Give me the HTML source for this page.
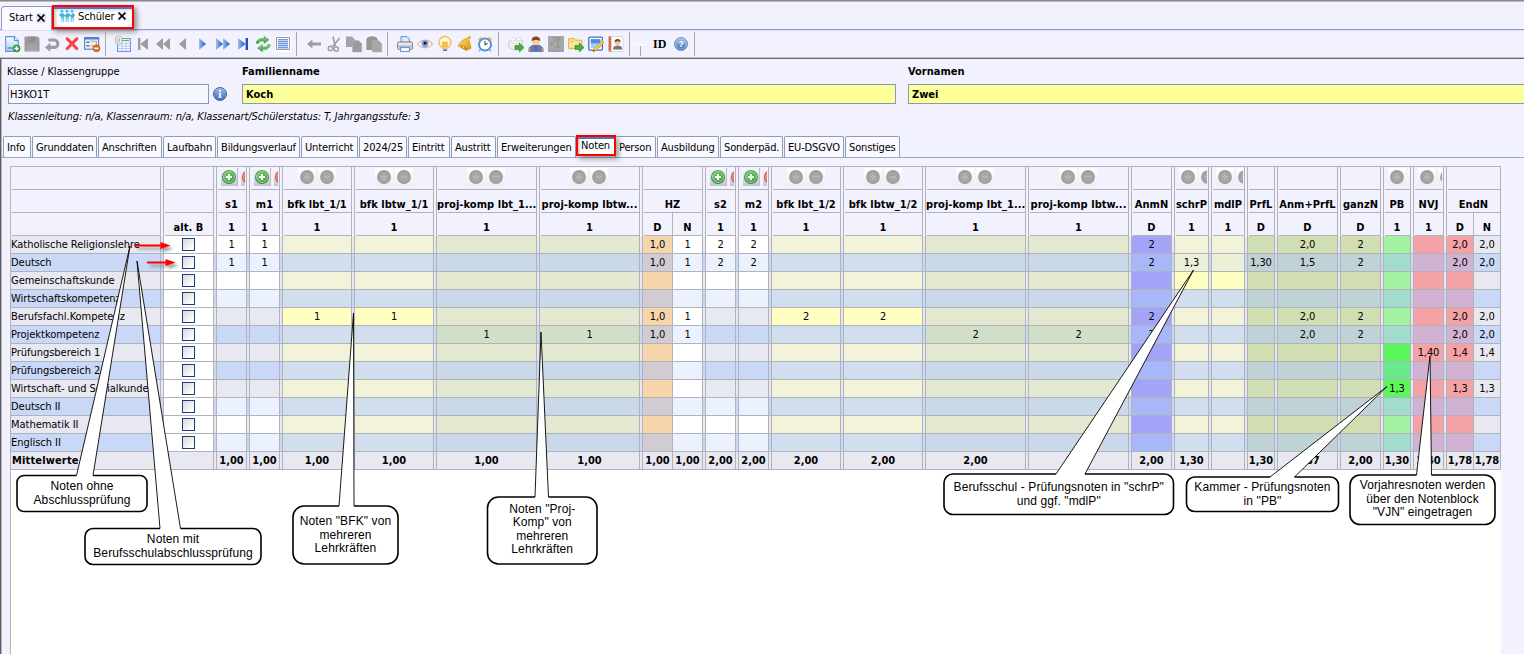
<!DOCTYPE html>
<html lang="de"><head><meta charset="utf-8"><title>Schüler – Noten</title>
<style>

html,body{margin:0;padding:0}
html{overflow:hidden}
body{width:1524px;height:654px;overflow:hidden;position:relative;background:#f2f2ff;font:11px/13px "DejaVu Sans Condensed","Liberation Sans",sans-serif;color:#000;letter-spacing:-.1px}
div,span{position:absolute;box-sizing:border-box;white-space:nowrap}
svg{position:absolute;overflow:visible}
.b{font-weight:bold;letter-spacing:0}
.c{text-align:center}
.vl{width:1px;background:#b2b2ba}
.hl{height:1px;background:#b2b2ba}
.tab{top:136px;height:21px;border:1px solid #8e9dba;border-bottom:none;border-radius:2px 2px 0 0;background:#f9f9ff;line-height:22px;padding-left:3px;letter-spacing:-.15px;overflow:hidden}
.sep{top:32px;width:1px;height:24px;background:#a6a6ac}
.cell{line-height:17px;text-align:center;height:17px}
.hd{font-weight:bold;letter-spacing:.05px;text-align:center;height:22px;line-height:30px;overflow:hidden}
.btn{top:168px;width:18px;height:18px}
.bg1{width:17px;background:linear-gradient(#f8f8ff,#c4c4d4);border-right:1px solid #bcbccc}
.bg0{background:linear-gradient(#fff,#ececf2)}
.clip{overflow:hidden;top:167px;height:22px}
.co{font:12px/13.6px "Liberation Sans",sans-serif;text-align:center;letter-spacing:.1px;white-space:normal}
.cb{width:13px;height:13px;border:1px solid #1c3f7c;background:linear-gradient(135deg,#d8d8d8,#fff 85%)}

</style></head><body>
<div style="left:0;top:0;width:1524px;height:1px;background:#8a8a8a"></div>
<div style="left:0;top:1px;width:1524px;height:1px;background:#b9b9c0"></div>
<div style="left:0;top:58px;width:1px;height:596px;background:#5e5e5e"></div>
<div style="left:1px;top:58px;width:1px;height:596px;background:#b4b4bc"></div>
<div style="left:0;top:29px;width:1524px;height:1px;background:#8fa1c2"></div>
<div style="left:0;top:30px;width:1524px;height:1px;background:#d9dff0"></div>
<div style="left:1px;top:6px;width:51px;height:24px;border:1px solid #8e9dba;border-bottom:none;border-radius:4px 0 0 0;background:#f9f9ff"></div>
<div style="left:9px;top:11px;line-height:13px">Start</div>
<div style="left:36px;top:13px;width:10px;height:10px;background:#e4e4ee"></div>
<svg style="left:37px;top:14px" width="8" height="8" viewBox="0 0 8 8"><path d="M.6.6 7.4 7.4M7.4.6.6 7.4" stroke="#000" stroke-width="1.5" fill="none"/></svg>
<div style="left:52px;top:5px;width:82px;height:24px;background:#fff;border:2px solid #f00;box-shadow:3px 3px 5px rgba(70,70,70,.55)"></div>
<div style="left:54px;top:7px;width:78px;height:2px;background:#4a76c8"></div>
<div style="left:54px;top:9px;width:78px;height:3px;background:linear-gradient(#dcdcdc,#fff)"></div>
<div style="left:54px;top:9px;width:4px;height:18px;background:linear-gradient(90deg,#c8c8c8,rgba(255,255,255,0))"></div>
<svg style="left:59px;top:10px" width="16" height="12" viewBox="0 0 16 12"><defs><linearGradient id="gpp" x1="0" y1="0" x2="0" y2="1"><stop offset="0" stop-color="#22a4d2"/><stop offset="1" stop-color="#8fd6ec"/></linearGradient></defs><g fill="url(#gpp)"><circle cx="3" cy="1.6" r="1.5"/><circle cx="8" cy="1.6" r="1.5"/><circle cx="13" cy="1.6" r="1.5"/><path d="M0 5.2 1.4 3.6h3.2L6 5.2 7.4 3.6h3.2L12 5.2 13.4 3.6h1.6l1 2.2-1.2 1.4V12h-1.2V8.6h-.6V12h-1.2V7.2L10.6 6 9.8 7.2V12H8.6V8.6H8V12H6.8V7.2L6 6 5.2 7.2V12H4V8.6h-.6V12H2.2V7.2L0 5.2z" opacity=".95"/></g></svg>
<div style="left:78px;top:10px;line-height:13px">Schüler</div>
<div style="left:117px;top:11px;width:10px;height:10px;background:#f1f1f7"></div>
<svg style="left:118px;top:12px" width="8" height="8" viewBox="0 0 8 8"><path d="M.6.6 7.4 7.4M7.4.6.6 7.4" stroke="#000" stroke-width="1.5" fill="none"/></svg>
<div style="left:0;top:57px;width:1524px;height:1px;background:#c0c0c8"></div>
<div style="left:0;top:58px;width:1524px;height:1px;background:#6c6c70"></div>
<div class="sep" style="left:105px"></div>
<div class="sep" style="left:296px"></div>
<div class="sep" style="left:387px"></div>
<div class="sep" style="left:498px"></div>
<div class="sep" style="left:629px"></div>
<div class="sep" style="left:694px"></div>
<svg width="0" height="0" style="left:0;top:0"><defs><linearGradient id="gpg" x1="0" y1="0" x2="0" y2="1"><stop offset="0" stop-color="#fdfeff"/><stop offset="1" stop-color="#a9cdf6"/></linearGradient><linearGradient id="gbl" x1="0" y1="0" x2="1" y2="0"><stop offset="0" stop-color="#9cc0f4"/><stop offset="1" stop-color="#1c50c0"/></linearGradient><linearGradient id="ggr" x1="0" y1="0" x2="0" y2="1"><stop offset="0" stop-color="#8fd58a"/><stop offset="1" stop-color="#3c9a3c"/></linearGradient><linearGradient id="ggd" x1="0" y1="0" x2="1" y2="1"><stop offset="0" stop-color="#ffe27a"/><stop offset="1" stop-color="#d8900c"/></linearGradient><linearGradient id="ghl" x1="0" y1="0" x2="0" y2="1"><stop offset="0" stop-color="#a9c3ea"/><stop offset="1" stop-color="#3b6cb6"/></linearGradient><radialGradient id="gbu" cx=".5" cy=".4" r=".6"><stop offset="0" stop-color="#ffffff"/><stop offset="1" stop-color="#ffe9a0"/></radialGradient></defs></svg>
<svg style="left:5px;top:36px" width="16" height="16" viewBox="0 0 16 16"><path d="M.7.6h8.6l4 4v10.8H.7z" fill="url(#gpg)" stroke="#5f93dc" stroke-width="1.1"/><path d="M9.3.6v4h4" fill="#dcebfb" stroke="#4f86d6" stroke-width="1"/><rect x="2.4" y="11" width="7" height="2" fill="#6fa4e6"/><circle cx="11.6" cy="12.4" r="3.5" fill="#3fa23c" stroke="#2a7d28" stroke-width=".6"/><path d="M11.6 10.2v4.4M9.4 12.4h4.4" stroke="#fff" stroke-width="1.5"/></svg>
<svg style="left:24px;top:36px" width="16" height="16" viewBox="0 0 16 16"><path d="M1 .6h12.6L15.5 2.4V15.4H.5V1.1z" fill="#9c9c9c"/><rect x="4" y=".6" width="7" height="5" fill="#8c8c8c"/><rect x="5.2" y="1.4" width="1.3" height="3" fill="#a8a8a8"/><rect x="3" y="8.6" width="10" height="6.2" fill="#a9a9a9"/><path d="M4 10.4h8M4 12.4h8" stroke="#999" stroke-width=".8"/></svg>
<svg style="left:45px;top:36px" width="16" height="16" viewBox="0 0 16 16"><path d="M3.4 4H9.2a3.7 3.7 0 0 1 0 7.4H4" fill="none" stroke="#9c9c9c" stroke-width="3.1"/><path d="M0 11.4 5.2 6.8v9z" fill="#9c9c9c"/></svg>
<svg style="left:65px;top:36px" width="14" height="16" viewBox="0 0 14 16"><path d="M2.2 2.8 11.8 12.6M11.8 2.8 2.2 12.6" stroke="#f79a9a" stroke-width="4" stroke-linecap="round" opacity=".55"/><path d="M2.2 2.8 11.8 12.6M11.8 2.8 2.2 12.6" stroke="#f04444" stroke-width="2.7" stroke-linecap="round"/></svg>
<svg style="left:84px;top:36px" width="16" height="16" viewBox="0 0 16 16"><rect x=".6" y="1.6" width="14" height="11.6" fill="#f1efe4" stroke="#4c7fd2" stroke-width="1.1"/><rect x=".6" y="1.3" width="14" height="2.2" fill="#4c7fd2"/><rect x="2.4" y="5.6" width="3" height="1.4" fill="#3d6fd0"/><rect x="2.4" y="9.2" width="3" height="1.4" fill="#3d6fd0"/><path d="M6.4 5.2h6v3.4M6.4 9.9h4" stroke="#a0a0a0" stroke-width=".9" fill="none"/><circle cx="12.5" cy="12.3" r="3.5" fill="#e8701c" stroke="#b84e0c" stroke-width=".6"/><rect x="10.4" y="11.6" width="4.2" height="1.5" fill="#fff"/></svg>
<svg style="left:115px;top:36px" width="16" height="16" viewBox="0 0 16 16"><rect x="2.6" y="2.6" width="12.8" height="12.8" fill="#fff" stroke="#6d9ce2" stroke-width="1.2"/><path d="M6 4.6h8" stroke="#69b84a" stroke-width="1.2"/><path d="M3 7.4h12M3 10h12M3 12.6h12M7 6v9M11 6v9" stroke="#9dbdee" stroke-width=".8"/><rect x=".4" y=".4" width="6.4" height="7.6" rx="1.6" fill="#ececec" stroke="#b4b4b4" stroke-width=".8"/><path d="M2.8 2.2v4M4.4 2.2v4" stroke="#aaa" stroke-width=".8"/></svg>
<svg style="left:135px;top:36px" width="16" height="16" viewBox="0 0 16 16"><rect x="3" y="2" width="2.4" height="12" fill="#9c9c9c"/><path d="M5.4 8 13 2v12z" fill="#9c9c9c"/></svg>
<svg style="left:155px;top:36px" width="16" height="16" viewBox="0 0 16 16"><path d="M1 8 8 2v12zM8 8 15 2v12z" fill="#9c9c9c"/></svg>
<svg style="left:175px;top:36px" width="16" height="16" viewBox="0 0 16 16"><path d="M4 8 11 2v12z" fill="#9c9c9c"/></svg>
<svg style="left:195px;top:36px" width="16" height="16" viewBox="0 0 16 16"><path d="M11 8 4 2v12z" fill="url(#gbl)"/></svg>
<svg style="left:215px;top:36px" width="16" height="16" viewBox="0 0 16 16"><path d="M8 8 1 2v12z" fill="url(#gbl)"/><path d="M15 8 8 2v12z" fill="url(#gbl)"/></svg>
<svg style="left:235px;top:36px" width="16" height="16" viewBox="0 0 16 16"><path d="M10.6 8 3 2v12z" fill="url(#gbl)"/><rect x="10.6" y="2" width="2.4" height="12" fill="#1c4fc0"/></svg>
<svg style="left:255px;top:36px" width="16" height="16" viewBox="0 0 16 16"><path d="M1 7.2C1.6 3.6 5.2 2 9 2.6V.2l5 3.6-5 3.6V5.2C6 4.6 4 5.4 3.6 7.6z" fill="url(#ggr)" stroke="#3d963d" stroke-width=".5"/><path d="M15.4 8.8c-.6 3.6-4.2 5.2-8 4.6v2.4l-5-3.6 5-3.6v2.2c3 .6 5-.2 5.4-2.4z" fill="url(#ggr)" stroke="#3d963d" stroke-width=".5"/></svg>
<svg style="left:275px;top:36px" width="16" height="16" viewBox="0 0 16 16"><rect width="16" height="16" fill="#fff"/><rect x="1.5" y="1.5" width="13" height="12" fill="#fff" stroke="#9a9a9a" stroke-width="1"/><path d="M3 3.8h10M3 5.8h10M3 7.8h10M3 9.8h10M3 11.8h10" stroke="#2f6fd0" stroke-width="1"/></svg>
<svg style="left:306px;top:36px" width="16" height="16" viewBox="0 0 16 16"><path d="M1 8 6.4 3.6v2.8H15v3.2H6.4v2.8z" fill="#9c9c9c"/></svg>
<svg style="left:326px;top:36px" width="16" height="16" viewBox="0 0 16 16"><path d="M7 0.6 9.2 10M13.6 2 6.4 11" stroke="#9c9c9c" stroke-width="1.6" fill="none"/><circle cx="4.4" cy="12.4" r="2.2" fill="none" stroke="#9c9c9c" stroke-width="1.4"/><circle cx="10.2" cy="13" r="2.2" fill="none" stroke="#9c9c9c" stroke-width="1.4"/></svg>
<svg style="left:346px;top:36px" width="16" height="16" viewBox="0 0 16 16"><path d="M0 .6h6l3 3V11H0z" fill="#a4a4a4"/><path d="M6.4 4.6H12.6l3.2 3.2V16H6.4z" fill="#9c9c9c" stroke="#b4b4b4" stroke-width=".6"/></svg>
<svg style="left:366px;top:36px" width="16" height="16" viewBox="0 0 16 16"><path d="M1.6 1.6Q6 -1 10.4 1.6L11.6 3v11H.4V3z" fill="#969696"/><path d="M6.4 4.6H12.6l3.2 3.2V16H6.4z" fill="#a6a6a6" stroke="#b4b4b4" stroke-width=".6"/></svg>
<svg style="left:397px;top:36px" width="16" height="16" viewBox="0 0 16 16"><path d="M4 .6h6l2.4 2.4V8H4z" fill="#dcebfb" stroke="#5a8fdc" stroke-width="1"/><rect x=".6" y="6" width="14.8" height="7.4" rx="1.6" fill="#e8e8e8" stroke="#787878" stroke-width="1"/><rect x="1.4" y="9.4" width="13.2" height="2.2" fill="#b9b9b9"/><rect x="3.6" y="11.6" width="8.8" height="3.8" fill="#fff" stroke="#5a8fdc" stroke-width="1"/></svg>
<svg style="left:417px;top:36px" width="16" height="16" viewBox="0 0 16 16"><path d="M.6 8C4 2.8 12 2.8 15.4 8 12 13 4 13 .6 8z" fill="#fff" stroke="#e9b798" stroke-width="1.3"/><circle cx="8" cy="7.6" r="3.6" fill="#7f9fe6"/><circle cx="8" cy="7.2" r="1.4" fill="#101020"/></svg>
<svg style="left:437px;top:36px" width="16" height="16" viewBox="0 0 16 16"><circle cx="8" cy="6.4" r="6" fill="url(#gbu)" stroke="#f2b858" stroke-width="1.2"/><rect x="5.8" y="6" width="4.4" height="5" fill="#fbc530" stroke="#f0a030" stroke-width=".6"/><rect x="5.6" y="11.4" width="4.8" height="2.6" fill="#c8c8c8"/><rect x="6.2" y="13.6" width="3.6" height="1.4" fill="#606060"/></svg>
<svg style="left:457px;top:36px" width="16" height="16" viewBox="0 0 16 16"><path d="M11.4 1.6 14.2 12.2 9 14.6 1 9.8C3 6 6.4 3 11.4 1.6z" fill="url(#ggd)" stroke="#d8900c" stroke-width=".7"/><circle cx="12.6" cy="1.4" r="1.3" fill="#e8a820"/><path d="M3.6 9.4 10 13" stroke="#b87408" stroke-width="1.2"/><circle cx="6.4" cy="11" r="1.4" fill="#f8d870" stroke="#b87408" stroke-width=".6"/></svg>
<svg style="left:477px;top:36px" width="16" height="16" viewBox="0 0 16 16"><path d="M1 3.6 3.8.8 5.6 2.4 2.6 5.4zM15 3.6 12.2.8 10.4 2.4l3 3z" fill="#f5b93c"/><circle cx="8" cy="8.6" r="6" fill="#fff" stroke="#4f92d6" stroke-width="2"/><path d="M8 5v3.8l2.6-1.6" stroke="#555" stroke-width="1.1" fill="none"/><path d="M3.4 13.6 2 15.4M12.6 13.6 14 15.4" stroke="#9a9a9a" stroke-width="1.3"/></svg>
<svg style="left:508px;top:36px" width="16" height="16" viewBox="0 0 16 16"><path d="M.6 6 7 2.4 14.6 5v6L8 14.6.6 11.6z" fill="#f0f0f0" stroke="#c6c6c6" stroke-width=".8"/><ellipse cx="5" cy="3.6" rx="2.4" ry="1.5" fill="#fff" stroke="#cfcfcf" stroke-width=".6"/><ellipse cx="10.4" cy="3" rx="2.4" ry="1.5" fill="#fff" stroke="#cfcfcf" stroke-width=".6"/><ellipse cx="7.6" cy="6" rx="2.4" ry="1.5" fill="#fff" stroke="#cfcfcf" stroke-width=".6"/><path d="M7 9.6h4.4V7L16 11.6 11.4 16v-2.6H7z" fill="#4cae3c" stroke="#2f862a" stroke-width=".7"/></svg>
<svg style="left:528px;top:36px" width="16" height="16" viewBox="0 0 16 16"><path d="M.8 15.4C.8 10.6 3.6 9 8 9s7.2 1.6 7.2 6.4z" fill="#4b82cc" stroke="#2d5ea8" stroke-width=".6"/><circle cx="8" cy="5.6" r="3.8" fill="#f6cfa6"/><path d="M3.8 5.2C3.4 1.8 6 .4 8.4.6 11.4.8 12.6 3 12.2 5.4 10.6 3.6 6.4 3.4 3.8 5.2z" fill="#8a4518"/><path d="M7.2 9.2h1.6L9.2 13 8 14.6 6.8 13z" fill="#d83a2a"/><circle cx="1.4" cy="13.6" r="1.3" fill="#f0a040"/><circle cx="14.6" cy="13.6" r="1.3" fill="#f0a040"/></svg>
<svg style="left:548px;top:36px" width="16" height="16" viewBox="0 0 16 16"><rect width="16" height="16" fill="#a8a8a8"/><text x="4.6" y="5.8" font-family="Liberation Sans,sans-serif" font-size="6.5" fill="#8a8a8a">TB</text><path d="M9.6 6v6M7 9.8l2.6 3 2.6-3M2.4 8h3M3.9 6.5v3" stroke="#8e8e8e" stroke-width="1" fill="none"/><path d="M1 15h14" stroke="#8e8e8e" stroke-width="1" stroke-dasharray="2 1"/></svg>
<svg style="left:568px;top:36px" width="16" height="16" viewBox="0 0 16 16"><path d="M.6 2.6h5.6l1.4 1.6h6.2v8.4H.6z" fill="#fbe29a" stroke="#e9ae3a" stroke-width="1"/><path d="M2.6 5.4h3" stroke="#e9ae3a" stroke-width="1"/><path d="M7 9.6h4.4V7L16 11.6 11.4 16v-2.6H7z" fill="#4cae3c" stroke="#2f862a" stroke-width=".7"/></svg>
<svg style="left:588px;top:36px" width="16" height="16" viewBox="0 0 16 16"><rect x=".8" y="1.2" width="13.6" height="13" rx="1.2" fill="#fff" stroke="#476fc2" stroke-width="1.3"/><rect x="2.8" y="3.2" width="9.6" height="9" fill="#9fd0f4"/><rect x="2.8" y="3.2" width="9.6" height="4" fill="#4a8fe0"/><path d="M14.2 4.6 16 6.4 7.6 14.8 5 15.6 5.8 13z" fill="#f8cf48" stroke="#c88a18" stroke-width=".7"/><path d="M5 15.6 5.6 13.6 7 15z" fill="#6a3c10"/></svg>
<svg style="left:608px;top:36px" width="16" height="16" viewBox="0 0 16 16"><rect x="1.6" y=".6" width="13.4" height="14.8" fill="#fff" stroke="#d0d0d0" stroke-width=".8"/><rect x=".6" y=".6" width="2.6" height="14.8" fill="#c8502c"/><path d="M0 2.4h3.4M0 4.8h3.4M0 7.2h3.4M0 9.6h3.4M0 12h3.4M0 14.2h3.4" stroke="#e8b4a0" stroke-width=".7"/><path d="M5 13.6c0-3 1.6-4 4.6-4s4.6 1 4.6 4z" fill="#6c7480"/><circle cx="9.6" cy="6.6" r="2.8" fill="#f2c8a0"/><path d="M6.6 6.2C6.4 3.8 8 2.8 9.8 3c2 .2 3 1.400 2.700 3.200C11.200 5 8.400 5 6.600 6.200z" fill="#7a421c"/></svg>
<svg style="left:674px;top:37px" width="14" height="14" viewBox="0 0 14 14"><circle cx="7" cy="7" r="6.5" fill="url(#ghl)" stroke="#6d93d0" stroke-width="1"/><circle cx="7" cy="7" r="5.2" fill="none" stroke="#c9daf3" stroke-width=".7" opacity=".8"/><text x="7" y="10.4" text-anchor="middle" font-family="Liberation Sans,sans-serif" font-weight="bold" font-size="9.5" fill="#fff">?</text></svg>
<div style="left:635px;top:44px;width:11px;height:1px;background:#fff"></div>
<div style="left:640px;top:46px;width:1px;height:10px;background:#a8a8b0"></div>
<div class="b" style="left:653px;top:38px;font:bold 12px/13px 'Liberation Serif',serif">ID</div>
<div style="left:7px;top:65px">Klasse / Klassengruppe</div>
<div style="left:8px;top:84px;width:201px;height:20px;border:1px solid #7f9db9;background:#f6f6ff;line-height:19px;padding-left:1px">H3KO1T</div>
<svg style="left:213px;top:87px" width="14" height="14" viewBox="0 0 14 14"><defs><linearGradient id="gi" x1="0" y1="0" x2="0" y2="1"><stop offset="0" stop-color="#9fbbe6"/><stop offset="1" stop-color="#3f6fb8"/></linearGradient></defs><circle cx="7" cy="7" r="6.5" fill="url(#gi)" stroke="#3d64a6" stroke-width="1"/><circle cx="7" cy="3.8" r="1.1" fill="#fff"/><path d="M5.6 5.8h2.3v4h.9v1H5.4v-1h.9V6.8h-.7z" fill="#fff"/></svg>
<div class="b" style="left:242px;top:65px">Familienname</div>
<div class="b" style="left:242px;top:84px;width:654px;height:20px;border:1px solid #7f9db9;background:#ffff99;line-height:19px;padding-left:3px">Koch</div>
<div class="b" style="left:908px;top:65px">Vornamen</div>
<div class="b" style="left:908px;top:84px;width:640px;height:20px;border:1px solid #7f9db9;background:#ffff99;line-height:19px;padding-left:3px">Zwei</div>
<div style="left:8px;top:110px;font-style:italic">Klassenleitung: n/a, Klassenraum: n/a, Klassenart/Schülerstatus: T, Jahrgangsstufe: 3</div>
<div style="left:2px;top:157px;width:1522px;height:1px;background:#9aaac6"></div>
<div class="tab" style="left:3px;width:28px">Info</div>
<div class="tab" style="left:32px;width:65px">Grunddaten</div>
<div class="tab" style="left:98px;width:64px">Anschriften</div>
<div class="tab" style="left:163px;width:53px">Laufbahn</div>
<div class="tab" style="left:217px;width:83px">Bildungsverlauf</div>
<div class="tab" style="left:301px;width:57px">Unterricht</div>
<div class="tab" style="left:359px;width:48px">2024/25</div>
<div class="tab" style="left:408px;width:42px">Eintritt</div>
<div class="tab" style="left:451px;width:45px">Austritt</div>
<div class="tab" style="left:497px;width:79px">Erweiterungen</div>
<div class="tab" style="left:615px;width:41px">Person</div>
<div class="tab" style="left:657px;width:62px">Ausbildung</div>
<div class="tab" style="left:720px;width:63px">Sonderpäd.</div>
<div class="tab" style="left:784px;width:60px">EU-DSGVO</div>
<div class="tab" style="left:845px;width:55px">Sonstiges</div>
<div style="left:576px;top:135px;width:40px;height:21px;background:#fff;border:2px solid #f00;box-shadow:3px 3px 5px rgba(70,70,70,.5)"></div>
<div style="left:578px;top:137px;width:36px;height:2px;background:#4a76c8"></div>
<div style="left:578px;top:139px;width:3px;height:15px;background:linear-gradient(90deg,#c8c8c8,#fff)"></div>
<div style="left:581px;top:139px;line-height:13px;letter-spacing:-.15px">Noten</div>
<div style="left:10px;top:166px;width:1491px;height:488px;background:#fff;border-left:1px solid #b2b2ba"></div>
<div style="left:11px;top:167px;width:1489px;height:68px;background:#f2f2ff"></div>
<div style="left:11px;top:236px;width:1489px;height:17px;background:#e8e8f0"></div>
<div style="left:11px;top:254px;width:1489px;height:17px;background:#c9d8f7"></div>
<div style="left:11px;top:272px;width:1489px;height:17px;background:#e8e8f0"></div>
<div style="left:11px;top:290px;width:1489px;height:17px;background:#c9d8f7"></div>
<div style="left:11px;top:308px;width:1489px;height:17px;background:#e8e8f0"></div>
<div style="left:11px;top:326px;width:1489px;height:17px;background:#c9d8f7"></div>
<div style="left:11px;top:344px;width:1489px;height:17px;background:#e8e8f0"></div>
<div style="left:11px;top:362px;width:1489px;height:17px;background:#c9d8f7"></div>
<div style="left:11px;top:380px;width:1489px;height:17px;background:#e8e8f0"></div>
<div style="left:11px;top:398px;width:1489px;height:17px;background:#c9d8f7"></div>
<div style="left:11px;top:416px;width:1489px;height:17px;background:#e8e8f0"></div>
<div style="left:11px;top:434px;width:1489px;height:17px;background:#c9d8f7"></div>
<div style="left:11px;top:452px;width:1489px;height:17px;background:#e8e8f0"></div>
<div class="cell" style="left:11px;top:236px;text-align:left;letter-spacing:-.03px">Katholische Religionslehre</div>
<div class="cell" style="left:11px;top:254px;text-align:left;letter-spacing:-.03px">Deutsch</div>
<div class="cell" style="left:11px;top:272px;text-align:left;letter-spacing:-.03px">Gemeinschaftskunde</div>
<div class="cell" style="left:11px;top:290px;text-align:left;letter-spacing:-.03px">Wirtschaftskompetenz</div>
<div class="cell" style="left:11px;top:308px;text-align:left;letter-spacing:-.03px">Berufsfachl.Kompetenz</div>
<div class="cell" style="left:11px;top:326px;text-align:left;letter-spacing:-.03px">Projektkompetenz</div>
<div class="cell" style="left:11px;top:344px;text-align:left;letter-spacing:-.03px">Prüfungsbereich 1</div>
<div class="cell" style="left:11px;top:362px;text-align:left;letter-spacing:-.03px">Prüfungsbereich 2</div>
<div class="cell" style="left:11px;top:380px;text-align:left;letter-spacing:-.03px">Wirtschaft- und Sozialkunde</div>
<div class="cell" style="left:11px;top:398px;text-align:left;letter-spacing:-.03px">Deutsch II</div>
<div class="cell" style="left:11px;top:416px;text-align:left;letter-spacing:-.03px">Mathematik II</div>
<div class="cell" style="left:11px;top:434px;text-align:left;letter-spacing:-.03px">Englisch II</div>
<div class="cell b" style="left:12px;top:452px;text-align:left;letter-spacing:.15px">Mittelwerte</div>
<div class="cell" style="left:164px;top:236px;width:49px;background:#fff"></div>
<div class="cb" style="left:182px;top:238px"></div>
<div class="cell" style="left:164px;top:254px;width:49px;background:#fff"></div>
<div class="cb" style="left:182px;top:256px"></div>
<div class="cell" style="left:164px;top:272px;width:49px;background:#fff"></div>
<div class="cb" style="left:182px;top:274px"></div>
<div class="cell" style="left:164px;top:290px;width:49px;background:#fff"></div>
<div class="cb" style="left:182px;top:292px"></div>
<div class="cell" style="left:164px;top:308px;width:49px;background:#fff"></div>
<div class="cb" style="left:182px;top:310px"></div>
<div class="cell" style="left:164px;top:326px;width:49px;background:#fff"></div>
<div class="cb" style="left:182px;top:328px"></div>
<div class="cell" style="left:164px;top:344px;width:49px;background:#fff"></div>
<div class="cb" style="left:182px;top:346px"></div>
<div class="cell" style="left:164px;top:362px;width:49px;background:#fff"></div>
<div class="cb" style="left:182px;top:364px"></div>
<div class="cell" style="left:164px;top:380px;width:49px;background:#fff"></div>
<div class="cb" style="left:182px;top:382px"></div>
<div class="cell" style="left:164px;top:398px;width:49px;background:#fff"></div>
<div class="cb" style="left:182px;top:400px"></div>
<div class="cell" style="left:164px;top:416px;width:49px;background:#fff"></div>
<div class="cb" style="left:182px;top:418px"></div>
<div class="cell" style="left:164px;top:434px;width:49px;background:#fff"></div>
<div class="cb" style="left:182px;top:436px"></div>
<div class="cell" style="left:217px;top:236px;width:29px;background:#fff">1</div>
<div class="cell" style="left:217px;top:254px;width:29px;background:#ebf1ff">1</div>
<div class="cell" style="left:217px;top:272px;width:29px;background:#fff"></div>
<div class="cell" style="left:217px;top:290px;width:29px;background:#ebf1ff"></div>
<div class="cell" style="left:217px;top:398px;width:29px;background:#ebf1ff"></div>
<div class="cell" style="left:217px;top:416px;width:29px;background:#fff"></div>
<div class="cell" style="left:217px;top:434px;width:29px;background:#ebf1ff"></div>
<div class="cell b" style="left:217px;top:452px;width:29px">1,00</div>
<div class="cell" style="left:250px;top:236px;width:29px;background:#fff">1</div>
<div class="cell" style="left:250px;top:254px;width:29px;background:#ebf1ff">1</div>
<div class="cell" style="left:250px;top:272px;width:29px;background:#fff"></div>
<div class="cell" style="left:250px;top:290px;width:29px;background:#ebf1ff"></div>
<div class="cell" style="left:250px;top:398px;width:29px;background:#ebf1ff"></div>
<div class="cell" style="left:250px;top:416px;width:29px;background:#fff"></div>
<div class="cell" style="left:250px;top:434px;width:29px;background:#ebf1ff"></div>
<div class="cell b" style="left:250px;top:452px;width:29px">1,00</div>
<div class="cell" style="left:283px;top:236px;width:68px;background:#f3f3da"></div>
<div class="cell" style="left:283px;top:254px;width:68px;background:#d1deed"></div>
<div class="cell" style="left:283px;top:272px;width:68px;background:#f3f3da"></div>
<div class="cell" style="left:283px;top:290px;width:68px;background:#d1deed"></div>
<div class="cell" style="left:283px;top:308px;width:68px;background:#ffffc2">1</div>
<div class="cell" style="left:283px;top:326px;width:68px;background:#d1deed"></div>
<div class="cell" style="left:283px;top:344px;width:68px;background:#f3f3da"></div>
<div class="cell" style="left:283px;top:362px;width:68px;background:#d1deed"></div>
<div class="cell" style="left:283px;top:380px;width:68px;background:#f3f3da"></div>
<div class="cell" style="left:283px;top:398px;width:68px;background:#d1deed"></div>
<div class="cell" style="left:283px;top:416px;width:68px;background:#f3f3da"></div>
<div class="cell" style="left:283px;top:434px;width:68px;background:#d1deed"></div>
<div class="cell b" style="left:283px;top:452px;width:68px">1,00</div>
<div class="cell" style="left:355px;top:236px;width:78px;background:#f3f3da"></div>
<div class="cell" style="left:355px;top:254px;width:78px;background:#d1deed"></div>
<div class="cell" style="left:355px;top:272px;width:78px;background:#f3f3da"></div>
<div class="cell" style="left:355px;top:290px;width:78px;background:#d1deed"></div>
<div class="cell" style="left:355px;top:308px;width:78px;background:#ffffc2">1</div>
<div class="cell" style="left:355px;top:326px;width:78px;background:#d1deed"></div>
<div class="cell" style="left:355px;top:344px;width:78px;background:#f3f3da"></div>
<div class="cell" style="left:355px;top:362px;width:78px;background:#d1deed"></div>
<div class="cell" style="left:355px;top:380px;width:78px;background:#f3f3da"></div>
<div class="cell" style="left:355px;top:398px;width:78px;background:#d1deed"></div>
<div class="cell" style="left:355px;top:416px;width:78px;background:#f3f3da"></div>
<div class="cell" style="left:355px;top:434px;width:78px;background:#d1deed"></div>
<div class="cell b" style="left:355px;top:452px;width:78px">1,00</div>
<div class="cell" style="left:437px;top:236px;width:99px;background:#e3e9d1"></div>
<div class="cell" style="left:437px;top:254px;width:99px;background:#c9d9e9"></div>
<div class="cell" style="left:437px;top:272px;width:99px;background:#e3e9d1"></div>
<div class="cell" style="left:437px;top:290px;width:99px;background:#c9d9e9"></div>
<div class="cell" style="left:437px;top:308px;width:99px;background:#e3e9d1"></div>
<div class="cell" style="left:437px;top:326px;width:99px;background:#d2dfc8">1</div>
<div class="cell" style="left:437px;top:344px;width:99px;background:#e3e9d1"></div>
<div class="cell" style="left:437px;top:362px;width:99px;background:#c9d9e9"></div>
<div class="cell" style="left:437px;top:380px;width:99px;background:#e3e9d1"></div>
<div class="cell" style="left:437px;top:398px;width:99px;background:#c9d9e9"></div>
<div class="cell" style="left:437px;top:416px;width:99px;background:#e3e9d1"></div>
<div class="cell" style="left:437px;top:434px;width:99px;background:#c9d9e9"></div>
<div class="cell b" style="left:437px;top:452px;width:99px">1,00</div>
<div class="cell" style="left:540px;top:236px;width:99px;background:#e3e9d1"></div>
<div class="cell" style="left:540px;top:254px;width:99px;background:#c9d9e9"></div>
<div class="cell" style="left:540px;top:272px;width:99px;background:#e3e9d1"></div>
<div class="cell" style="left:540px;top:290px;width:99px;background:#c9d9e9"></div>
<div class="cell" style="left:540px;top:308px;width:99px;background:#e3e9d1"></div>
<div class="cell" style="left:540px;top:326px;width:99px;background:#d2dfc8">1</div>
<div class="cell" style="left:540px;top:344px;width:99px;background:#e3e9d1"></div>
<div class="cell" style="left:540px;top:362px;width:99px;background:#c9d9e9"></div>
<div class="cell" style="left:540px;top:380px;width:99px;background:#e3e9d1"></div>
<div class="cell" style="left:540px;top:398px;width:99px;background:#c9d9e9"></div>
<div class="cell" style="left:540px;top:416px;width:99px;background:#e3e9d1"></div>
<div class="cell" style="left:540px;top:434px;width:99px;background:#c9d9e9"></div>
<div class="cell b" style="left:540px;top:452px;width:99px">1,00</div>
<div class="cell" style="left:643px;top:236px;width:29px;background:#f5d5a9">1,0</div>
<div class="cell" style="left:643px;top:254px;width:29px;background:#d0ccd2">1,0</div>
<div class="cell" style="left:643px;top:272px;width:29px;background:#f5d5a9"></div>
<div class="cell" style="left:643px;top:290px;width:29px;background:#d0ccd2"></div>
<div class="cell" style="left:643px;top:308px;width:29px;background:#f5d5a9">1,0</div>
<div class="cell" style="left:643px;top:326px;width:29px;background:#d0ccd2">1,0</div>
<div class="cell" style="left:643px;top:344px;width:29px;background:#f5d5a9"></div>
<div class="cell" style="left:643px;top:362px;width:29px;background:#d0ccd2"></div>
<div class="cell" style="left:643px;top:380px;width:29px;background:#f5d5a9"></div>
<div class="cell" style="left:643px;top:398px;width:29px;background:#d0ccd2"></div>
<div class="cell" style="left:643px;top:416px;width:29px;background:#f5d5a9"></div>
<div class="cell" style="left:643px;top:434px;width:29px;background:#d0ccd2"></div>
<div class="cell b" style="left:643px;top:452px;width:29px">1,00</div>
<div class="cell" style="left:673px;top:236px;width:29px;background:#fff">1</div>
<div class="cell" style="left:673px;top:254px;width:29px;background:#ebf1ff">1</div>
<div class="cell" style="left:673px;top:272px;width:29px;background:#fff"></div>
<div class="cell" style="left:673px;top:290px;width:29px;background:#ebf1ff"></div>
<div class="cell" style="left:673px;top:308px;width:29px;background:#fff">1</div>
<div class="cell" style="left:673px;top:326px;width:29px;background:#ebf1ff">1</div>
<div class="cell" style="left:673px;top:344px;width:29px;background:#fff"></div>
<div class="cell" style="left:673px;top:362px;width:29px;background:#ebf1ff"></div>
<div class="cell" style="left:673px;top:380px;width:29px;background:#fff"></div>
<div class="cell" style="left:673px;top:398px;width:29px;background:#ebf1ff"></div>
<div class="cell" style="left:673px;top:416px;width:29px;background:#fff"></div>
<div class="cell" style="left:673px;top:434px;width:29px;background:#ebf1ff"></div>
<div class="cell b" style="left:673px;top:452px;width:29px">1,00</div>
<div class="cell" style="left:706px;top:236px;width:29px;background:#fff">2</div>
<div class="cell" style="left:706px;top:254px;width:29px;background:#ebf1ff">2</div>
<div class="cell" style="left:706px;top:272px;width:29px;background:#fff"></div>
<div class="cell" style="left:706px;top:290px;width:29px;background:#ebf1ff"></div>
<div class="cell" style="left:706px;top:398px;width:29px;background:#ebf1ff"></div>
<div class="cell" style="left:706px;top:416px;width:29px;background:#fff"></div>
<div class="cell" style="left:706px;top:434px;width:29px;background:#ebf1ff"></div>
<div class="cell b" style="left:706px;top:452px;width:29px">2,00</div>
<div class="cell" style="left:739px;top:236px;width:29px;background:#fff">2</div>
<div class="cell" style="left:739px;top:254px;width:29px;background:#ebf1ff">2</div>
<div class="cell" style="left:739px;top:272px;width:29px;background:#fff"></div>
<div class="cell" style="left:739px;top:290px;width:29px;background:#ebf1ff"></div>
<div class="cell" style="left:739px;top:398px;width:29px;background:#ebf1ff"></div>
<div class="cell" style="left:739px;top:416px;width:29px;background:#fff"></div>
<div class="cell" style="left:739px;top:434px;width:29px;background:#ebf1ff"></div>
<div class="cell b" style="left:739px;top:452px;width:29px">2,00</div>
<div class="cell" style="left:772px;top:236px;width:68px;background:#f3f3da"></div>
<div class="cell" style="left:772px;top:254px;width:68px;background:#d1deed"></div>
<div class="cell" style="left:772px;top:272px;width:68px;background:#f3f3da"></div>
<div class="cell" style="left:772px;top:290px;width:68px;background:#d1deed"></div>
<div class="cell" style="left:772px;top:308px;width:68px;background:#ffffc2">2</div>
<div class="cell" style="left:772px;top:326px;width:68px;background:#d1deed"></div>
<div class="cell" style="left:772px;top:344px;width:68px;background:#f3f3da"></div>
<div class="cell" style="left:772px;top:362px;width:68px;background:#d1deed"></div>
<div class="cell" style="left:772px;top:380px;width:68px;background:#f3f3da"></div>
<div class="cell" style="left:772px;top:398px;width:68px;background:#d1deed"></div>
<div class="cell" style="left:772px;top:416px;width:68px;background:#f3f3da"></div>
<div class="cell" style="left:772px;top:434px;width:68px;background:#d1deed"></div>
<div class="cell b" style="left:772px;top:452px;width:68px">2,00</div>
<div class="cell" style="left:844px;top:236px;width:78px;background:#f3f3da"></div>
<div class="cell" style="left:844px;top:254px;width:78px;background:#d1deed"></div>
<div class="cell" style="left:844px;top:272px;width:78px;background:#f3f3da"></div>
<div class="cell" style="left:844px;top:290px;width:78px;background:#d1deed"></div>
<div class="cell" style="left:844px;top:308px;width:78px;background:#ffffc2">2</div>
<div class="cell" style="left:844px;top:326px;width:78px;background:#d1deed"></div>
<div class="cell" style="left:844px;top:344px;width:78px;background:#f3f3da"></div>
<div class="cell" style="left:844px;top:362px;width:78px;background:#d1deed"></div>
<div class="cell" style="left:844px;top:380px;width:78px;background:#f3f3da"></div>
<div class="cell" style="left:844px;top:398px;width:78px;background:#d1deed"></div>
<div class="cell" style="left:844px;top:416px;width:78px;background:#f3f3da"></div>
<div class="cell" style="left:844px;top:434px;width:78px;background:#d1deed"></div>
<div class="cell b" style="left:844px;top:452px;width:78px">2,00</div>
<div class="cell" style="left:926px;top:236px;width:99px;background:#e3e9d1"></div>
<div class="cell" style="left:926px;top:254px;width:99px;background:#c9d9e9"></div>
<div class="cell" style="left:926px;top:272px;width:99px;background:#e3e9d1"></div>
<div class="cell" style="left:926px;top:290px;width:99px;background:#c9d9e9"></div>
<div class="cell" style="left:926px;top:308px;width:99px;background:#e3e9d1"></div>
<div class="cell" style="left:926px;top:326px;width:99px;background:#d2dfc8">2</div>
<div class="cell" style="left:926px;top:344px;width:99px;background:#e3e9d1"></div>
<div class="cell" style="left:926px;top:362px;width:99px;background:#c9d9e9"></div>
<div class="cell" style="left:926px;top:380px;width:99px;background:#e3e9d1"></div>
<div class="cell" style="left:926px;top:398px;width:99px;background:#c9d9e9"></div>
<div class="cell" style="left:926px;top:416px;width:99px;background:#e3e9d1"></div>
<div class="cell" style="left:926px;top:434px;width:99px;background:#c9d9e9"></div>
<div class="cell b" style="left:926px;top:452px;width:99px">2,00</div>
<div class="cell" style="left:1029px;top:236px;width:99px;background:#e3e9d1"></div>
<div class="cell" style="left:1029px;top:254px;width:99px;background:#c9d9e9"></div>
<div class="cell" style="left:1029px;top:272px;width:99px;background:#e3e9d1"></div>
<div class="cell" style="left:1029px;top:290px;width:99px;background:#c9d9e9"></div>
<div class="cell" style="left:1029px;top:308px;width:99px;background:#e3e9d1"></div>
<div class="cell" style="left:1029px;top:326px;width:99px;background:#d2dfc8">2</div>
<div class="cell" style="left:1029px;top:344px;width:99px;background:#e3e9d1"></div>
<div class="cell" style="left:1029px;top:362px;width:99px;background:#c9d9e9"></div>
<div class="cell" style="left:1029px;top:380px;width:99px;background:#e3e9d1"></div>
<div class="cell" style="left:1029px;top:398px;width:99px;background:#c9d9e9"></div>
<div class="cell" style="left:1029px;top:416px;width:99px;background:#e3e9d1"></div>
<div class="cell" style="left:1029px;top:434px;width:99px;background:#c9d9e9"></div>
<div class="cell b" style="left:1029px;top:452px;width:99px">2,00</div>
<div class="cell" style="left:1132px;top:236px;width:39px;background:#a3a3f7">2</div>
<div class="cell" style="left:1132px;top:254px;width:39px;background:#a8b7f8">2</div>
<div class="cell" style="left:1132px;top:272px;width:39px;background:#a3a3f7"></div>
<div class="cell" style="left:1132px;top:290px;width:39px;background:#a8b7f8"></div>
<div class="cell" style="left:1132px;top:308px;width:39px;background:#a3a3f7">2</div>
<div class="cell" style="left:1132px;top:326px;width:39px;background:#a8b7f8">2</div>
<div class="cell" style="left:1132px;top:344px;width:39px;background:#a3a3f7"></div>
<div class="cell" style="left:1132px;top:362px;width:39px;background:#a8b7f8"></div>
<div class="cell" style="left:1132px;top:380px;width:39px;background:#a3a3f7"></div>
<div class="cell" style="left:1132px;top:398px;width:39px;background:#a8b7f8"></div>
<div class="cell" style="left:1132px;top:416px;width:39px;background:#a3a3f7"></div>
<div class="cell" style="left:1132px;top:434px;width:39px;background:#a8b7f8"></div>
<div class="cell b" style="left:1132px;top:452px;width:39px">2,00</div>
<div class="cell" style="left:1175px;top:236px;width:33px;background:#f3f3da"></div>
<div class="cell" style="left:1175px;top:254px;width:33px;background:#ecf0d6">1,3</div>
<div class="cell" style="left:1175px;top:272px;width:33px;background:#ffffc2"></div>
<div class="cell" style="left:1175px;top:290px;width:33px;background:#d1deed"></div>
<div class="cell" style="left:1175px;top:308px;width:33px;background:#f3f3da"></div>
<div class="cell" style="left:1175px;top:326px;width:33px;background:#d1deed"></div>
<div class="cell" style="left:1175px;top:344px;width:33px;background:#f3f3da"></div>
<div class="cell" style="left:1175px;top:362px;width:33px;background:#d1deed"></div>
<div class="cell" style="left:1175px;top:380px;width:33px;background:#f3f3da"></div>
<div class="cell" style="left:1175px;top:398px;width:33px;background:#d1deed"></div>
<div class="cell" style="left:1175px;top:416px;width:33px;background:#f3f3da"></div>
<div class="cell" style="left:1175px;top:434px;width:33px;background:#d1deed"></div>
<div class="cell b" style="left:1175px;top:452px;width:33px">1,30</div>
<div class="cell" style="left:1212px;top:236px;width:32px;background:#f3f3da"></div>
<div class="cell" style="left:1212px;top:254px;width:32px;background:#ecf0d6"></div>
<div class="cell" style="left:1212px;top:272px;width:32px;background:#ffffc2"></div>
<div class="cell" style="left:1212px;top:290px;width:32px;background:#d1deed"></div>
<div class="cell" style="left:1212px;top:308px;width:32px;background:#f3f3da"></div>
<div class="cell" style="left:1212px;top:326px;width:32px;background:#d1deed"></div>
<div class="cell" style="left:1212px;top:344px;width:32px;background:#f3f3da"></div>
<div class="cell" style="left:1212px;top:362px;width:32px;background:#d1deed"></div>
<div class="cell" style="left:1212px;top:380px;width:32px;background:#f3f3da"></div>
<div class="cell" style="left:1212px;top:398px;width:32px;background:#d1deed"></div>
<div class="cell" style="left:1212px;top:416px;width:32px;background:#f3f3da"></div>
<div class="cell" style="left:1212px;top:434px;width:32px;background:#d1deed"></div>
<div class="cell" style="left:1248px;top:236px;width:26px;background:#d0deb2"></div>
<div class="cell" style="left:1248px;top:254px;width:26px;background:#bfd3d6">1,30</div>
<div class="cell" style="left:1248px;top:272px;width:26px;background:#d0deb2"></div>
<div class="cell" style="left:1248px;top:290px;width:26px;background:#bfd3d6"></div>
<div class="cell" style="left:1248px;top:308px;width:26px;background:#d0deb2"></div>
<div class="cell" style="left:1248px;top:326px;width:26px;background:#bfd3d6"></div>
<div class="cell" style="left:1248px;top:344px;width:26px;background:#d0deb2"></div>
<div class="cell" style="left:1248px;top:362px;width:26px;background:#bfd3d6"></div>
<div class="cell" style="left:1248px;top:380px;width:26px;background:#d0deb2"></div>
<div class="cell" style="left:1248px;top:398px;width:26px;background:#bfd3d6"></div>
<div class="cell" style="left:1248px;top:416px;width:26px;background:#d0deb2"></div>
<div class="cell" style="left:1248px;top:434px;width:26px;background:#bfd3d6"></div>
<div class="cell b" style="left:1248px;top:452px;width:26px">1,30</div>
<div class="cell" style="left:1278px;top:236px;width:59px;background:#d0deb2">2,0</div>
<div class="cell" style="left:1278px;top:254px;width:59px;background:#bfd3d6">1,5</div>
<div class="cell" style="left:1278px;top:272px;width:59px;background:#d0deb2"></div>
<div class="cell" style="left:1278px;top:290px;width:59px;background:#bfd3d6"></div>
<div class="cell" style="left:1278px;top:308px;width:59px;background:#d0deb2">2,0</div>
<div class="cell" style="left:1278px;top:326px;width:59px;background:#bfd3d6">2,0</div>
<div class="cell" style="left:1278px;top:344px;width:59px;background:#d0deb2"></div>
<div class="cell" style="left:1278px;top:362px;width:59px;background:#bfd3d6"></div>
<div class="cell" style="left:1278px;top:380px;width:59px;background:#d0deb2"></div>
<div class="cell" style="left:1278px;top:398px;width:59px;background:#bfd3d6"></div>
<div class="cell" style="left:1278px;top:416px;width:59px;background:#d0deb2"></div>
<div class="cell" style="left:1278px;top:434px;width:59px;background:#bfd3d6"></div>
<div class="cell b" style="left:1278px;top:452px;width:59px">1,87</div>
<div class="cell" style="left:1341px;top:236px;width:39px;background:#d0deb2">2</div>
<div class="cell" style="left:1341px;top:254px;width:39px;background:#bfd3d6">2</div>
<div class="cell" style="left:1341px;top:272px;width:39px;background:#d0deb2"></div>
<div class="cell" style="left:1341px;top:290px;width:39px;background:#bfd3d6"></div>
<div class="cell" style="left:1341px;top:308px;width:39px;background:#d0deb2">2</div>
<div class="cell" style="left:1341px;top:326px;width:39px;background:#bfd3d6">2</div>
<div class="cell" style="left:1341px;top:344px;width:39px;background:#d0deb2"></div>
<div class="cell" style="left:1341px;top:362px;width:39px;background:#bfd3d6"></div>
<div class="cell" style="left:1341px;top:380px;width:39px;background:#d0deb2"></div>
<div class="cell" style="left:1341px;top:398px;width:39px;background:#bfd3d6"></div>
<div class="cell" style="left:1341px;top:416px;width:39px;background:#d0deb2"></div>
<div class="cell" style="left:1341px;top:434px;width:39px;background:#bfd3d6"></div>
<div class="cell b" style="left:1341px;top:452px;width:39px">2,00</div>
<div class="cell" style="left:1384px;top:236px;width:26px;background:#a2f2a2"></div>
<div class="cell" style="left:1384px;top:254px;width:26px;background:#a2dccc"></div>
<div class="cell" style="left:1384px;top:272px;width:26px;background:#a2f2a2"></div>
<div class="cell" style="left:1384px;top:290px;width:26px;background:#a2dccc"></div>
<div class="cell" style="left:1384px;top:308px;width:26px;background:#a2f2a2"></div>
<div class="cell" style="left:1384px;top:326px;width:26px;background:#a2dccc"></div>
<div class="cell" style="left:1384px;top:344px;width:26px;background:#5af85a"></div>
<div class="cell" style="left:1384px;top:362px;width:26px;background:#6ae98a"></div>
<div class="cell" style="left:1384px;top:380px;width:26px;background:#5af85a">1,3</div>
<div class="cell" style="left:1384px;top:398px;width:26px;background:#a2dccc"></div>
<div class="cell" style="left:1384px;top:416px;width:26px;background:#a2f2a2"></div>
<div class="cell" style="left:1384px;top:434px;width:26px;background:#a2dccc"></div>
<div class="cell b" style="left:1384px;top:452px;width:26px">1,30</div>
<div class="cell" style="left:1414px;top:236px;width:29px;background:#f4a2a6"></div>
<div class="cell" style="left:1414px;top:254px;width:29px;background:#d2b2d2"></div>
<div class="cell" style="left:1414px;top:272px;width:29px;background:#f4a2a6"></div>
<div class="cell" style="left:1414px;top:290px;width:29px;background:#d2b2d2"></div>
<div class="cell" style="left:1414px;top:308px;width:29px;background:#f4a2a6"></div>
<div class="cell" style="left:1414px;top:326px;width:29px;background:#d2b2d2"></div>
<div class="cell" style="left:1414px;top:344px;width:29px;background:#f4a2a6">1,40</div>
<div class="cell" style="left:1414px;top:362px;width:29px;background:#d2b2d2"></div>
<div class="cell" style="left:1414px;top:380px;width:29px;background:#f4a2a6"></div>
<div class="cell" style="left:1414px;top:398px;width:29px;background:#d2b2d2"></div>
<div class="cell" style="left:1414px;top:416px;width:29px;background:#f4a2a6"></div>
<div class="cell" style="left:1414px;top:434px;width:29px;background:#d2b2d2"></div>
<div class="cell b" style="left:1414px;top:452px;width:29px">1,40</div>
<div class="cell" style="left:1447px;top:236px;width:26px;background:#f4a2a6">2,0</div>
<div class="cell" style="left:1447px;top:254px;width:26px;background:#d2b2d2">2,0</div>
<div class="cell" style="left:1447px;top:272px;width:26px;background:#f4a2a6"></div>
<div class="cell" style="left:1447px;top:290px;width:26px;background:#d2b2d2"></div>
<div class="cell" style="left:1447px;top:308px;width:26px;background:#f4a2a6">2,0</div>
<div class="cell" style="left:1447px;top:326px;width:26px;background:#d2b2d2">2,0</div>
<div class="cell" style="left:1447px;top:344px;width:26px;background:#f4a2a6">1,4</div>
<div class="cell" style="left:1447px;top:362px;width:26px;background:#d2b2d2"></div>
<div class="cell" style="left:1447px;top:380px;width:26px;background:#f4a2a6">1,3</div>
<div class="cell" style="left:1447px;top:398px;width:26px;background:#d2b2d2"></div>
<div class="cell" style="left:1447px;top:416px;width:26px;background:#f4a2a6"></div>
<div class="cell" style="left:1447px;top:434px;width:26px;background:#d2b2d2"></div>
<div class="cell b" style="left:1447px;top:452px;width:26px">1,78</div>
<div class="cell" style="left:1474px;top:236px;width:26px">2,0</div>
<div class="cell" style="left:1474px;top:254px;width:26px">2,0</div>
<div class="cell" style="left:1474px;top:308px;width:26px">2,0</div>
<div class="cell" style="left:1474px;top:326px;width:26px">2,0</div>
<div class="cell" style="left:1474px;top:344px;width:26px">1,4</div>
<div class="cell" style="left:1474px;top:380px;width:26px">1,3</div>
<div class="cell b" style="left:1474px;top:452px;width:26px">1,78</div>
<svg width="0" height="0" style="left:0;top:0"><defs><linearGradient id="bgG" x1="0" y1="0" x2="0" y2="1"><stop offset="0" stop-color="#4aa84a"/><stop offset="1" stop-color="#2f8a2f"/></linearGradient><linearGradient id="bgG2" x1="0" y1="0" x2="1" y2="1"><stop offset="0" stop-color="#7ccb78"/><stop offset="1" stop-color="#3f9f3f"/></linearGradient></defs></svg>
<div class="hd" style="left:164px;top:213px;width:49px">alt. B</div>
<div class="clip" style="left:217px;width:28px">
<div class="btn bg1" style="left:4px;top:1px"><svg style="left:1px;top:2px" width="14" height="14" viewBox="0 0 14 14"><circle cx="7" cy="7" r="7" fill="url(#bgG)"/><circle cx="7" cy="7" r="5.5" fill="url(#bgG2)" stroke="#bfe3ba" stroke-width=".7"/><path d="M7 4v6M4 7h6" stroke="#fff" stroke-width="2"/></svg></div><div class="btn bg1" style="left:24px;top:1px"><svg style="left:1px;top:2px" width="14" height="14" viewBox="0 0 14 14"><circle cx="7" cy="7" r="7" fill="#dc4a38"/><circle cx="7" cy="7" r="5.5" fill="#ee7058" stroke="#f6b8a8" stroke-width=".7"/><path d="M4 7h6" stroke="#fff" stroke-width="2"/></svg></div>
</div>
<div class="hd" style="left:217px;top:190px;width:29px">s1</div>
<div class="hd" style="left:217px;top:213px;width:29px">1</div>
<div class="clip" style="left:250px;width:28px">
<div class="btn bg1" style="left:4px;top:1px"><svg style="left:1px;top:2px" width="14" height="14" viewBox="0 0 14 14"><circle cx="7" cy="7" r="7" fill="url(#bgG)"/><circle cx="7" cy="7" r="5.5" fill="url(#bgG2)" stroke="#bfe3ba" stroke-width=".7"/><path d="M7 4v6M4 7h6" stroke="#fff" stroke-width="2"/></svg></div><div class="btn bg1" style="left:24px;top:1px"><svg style="left:1px;top:2px" width="14" height="14" viewBox="0 0 14 14"><circle cx="7" cy="7" r="7" fill="#dc4a38"/><circle cx="7" cy="7" r="5.5" fill="#ee7058" stroke="#f6b8a8" stroke-width=".7"/><path d="M4 7h6" stroke="#fff" stroke-width="2"/></svg></div>
</div>
<div class="hd" style="left:250px;top:190px;width:29px">m1</div>
<div class="hd" style="left:250px;top:213px;width:29px">1</div>
<div class="clip" style="left:283px;width:68px">
<div class="btn bg0" style="left:15px;top:1px"><svg style="left:2px;top:2px" width="14" height="14" viewBox="0 0 14 14"><circle cx="7" cy="7" r="6.9" fill="#9c9c9c"/><circle cx="7" cy="7" r="5.6" fill="#a6a6a6"/><path d="M7 4v6M4 7h6" stroke="#b6b6b6" stroke-width="1.8"/></svg></div><div class="btn bg0" style="left:35px;top:1px"><svg style="left:2px;top:2px" width="14" height="14" viewBox="0 0 14 14"><circle cx="7" cy="7" r="6.9" fill="#9c9c9c"/><circle cx="7" cy="7" r="5.6" fill="#a6a6a6"/><path d="M4 7h6" stroke="#b6b6b6" stroke-width="1.8"/></svg></div>
</div>
<div class="hd" style="left:283px;top:190px;width:68px">bfk lbt_1/1</div>
<div class="hd" style="left:283px;top:213px;width:68px">1</div>
<div class="clip" style="left:355px;width:78px">
<div class="btn bg0" style="left:20px;top:1px"><svg style="left:2px;top:2px" width="14" height="14" viewBox="0 0 14 14"><circle cx="7" cy="7" r="6.9" fill="#9c9c9c"/><circle cx="7" cy="7" r="5.6" fill="#a6a6a6"/><path d="M7 4v6M4 7h6" stroke="#b6b6b6" stroke-width="1.8"/></svg></div><div class="btn bg0" style="left:40px;top:1px"><svg style="left:2px;top:2px" width="14" height="14" viewBox="0 0 14 14"><circle cx="7" cy="7" r="6.9" fill="#9c9c9c"/><circle cx="7" cy="7" r="5.6" fill="#a6a6a6"/><path d="M4 7h6" stroke="#b6b6b6" stroke-width="1.8"/></svg></div>
</div>
<div class="hd" style="left:355px;top:190px;width:78px">bfk lbtw_1/1</div>
<div class="hd" style="left:355px;top:213px;width:78px">1</div>
<div class="clip" style="left:437px;width:99px">
<div class="btn bg0" style="left:30px;top:1px"><svg style="left:2px;top:2px" width="14" height="14" viewBox="0 0 14 14"><circle cx="7" cy="7" r="6.9" fill="#9c9c9c"/><circle cx="7" cy="7" r="5.6" fill="#a6a6a6"/><path d="M7 4v6M4 7h6" stroke="#b6b6b6" stroke-width="1.8"/></svg></div><div class="btn bg0" style="left:50px;top:1px"><svg style="left:2px;top:2px" width="14" height="14" viewBox="0 0 14 14"><circle cx="7" cy="7" r="6.9" fill="#9c9c9c"/><circle cx="7" cy="7" r="5.6" fill="#a6a6a6"/><path d="M4 7h6" stroke="#b6b6b6" stroke-width="1.8"/></svg></div>
</div>
<div class="hd" style="left:437px;top:190px;width:99px">proj-komp lbt_1...</div>
<div class="hd" style="left:437px;top:213px;width:99px">1</div>
<div class="clip" style="left:540px;width:99px">
<div class="btn bg0" style="left:30px;top:1px"><svg style="left:2px;top:2px" width="14" height="14" viewBox="0 0 14 14"><circle cx="7" cy="7" r="6.9" fill="#9c9c9c"/><circle cx="7" cy="7" r="5.6" fill="#a6a6a6"/><path d="M7 4v6M4 7h6" stroke="#b6b6b6" stroke-width="1.8"/></svg></div><div class="btn bg0" style="left:50px;top:1px"><svg style="left:2px;top:2px" width="14" height="14" viewBox="0 0 14 14"><circle cx="7" cy="7" r="6.9" fill="#9c9c9c"/><circle cx="7" cy="7" r="5.6" fill="#a6a6a6"/><path d="M4 7h6" stroke="#b6b6b6" stroke-width="1.8"/></svg></div>
</div>
<div class="hd" style="left:540px;top:190px;width:99px">proj-komp lbtw...</div>
<div class="hd" style="left:540px;top:213px;width:99px">1</div>
<div class="hd" style="left:643px;top:190px;width:59px">HZ</div>
<div class="hd" style="left:643px;top:213px;width:29px">D</div>
<div class="hd" style="left:673px;top:213px;width:29px">N</div>
<div class="clip" style="left:706px;width:28px">
<div class="btn bg1" style="left:4px;top:1px"><svg style="left:1px;top:2px" width="14" height="14" viewBox="0 0 14 14"><circle cx="7" cy="7" r="7" fill="url(#bgG)"/><circle cx="7" cy="7" r="5.5" fill="url(#bgG2)" stroke="#bfe3ba" stroke-width=".7"/><path d="M7 4v6M4 7h6" stroke="#fff" stroke-width="2"/></svg></div><div class="btn bg1" style="left:24px;top:1px"><svg style="left:1px;top:2px" width="14" height="14" viewBox="0 0 14 14"><circle cx="7" cy="7" r="7" fill="#dc4a38"/><circle cx="7" cy="7" r="5.5" fill="#ee7058" stroke="#f6b8a8" stroke-width=".7"/><path d="M4 7h6" stroke="#fff" stroke-width="2"/></svg></div>
</div>
<div class="hd" style="left:706px;top:190px;width:29px">s2</div>
<div class="hd" style="left:706px;top:213px;width:29px">1</div>
<div class="clip" style="left:739px;width:28px">
<div class="btn bg1" style="left:4px;top:1px"><svg style="left:1px;top:2px" width="14" height="14" viewBox="0 0 14 14"><circle cx="7" cy="7" r="7" fill="url(#bgG)"/><circle cx="7" cy="7" r="5.5" fill="url(#bgG2)" stroke="#bfe3ba" stroke-width=".7"/><path d="M7 4v6M4 7h6" stroke="#fff" stroke-width="2"/></svg></div><div class="btn bg1" style="left:24px;top:1px"><svg style="left:1px;top:2px" width="14" height="14" viewBox="0 0 14 14"><circle cx="7" cy="7" r="7" fill="#dc4a38"/><circle cx="7" cy="7" r="5.5" fill="#ee7058" stroke="#f6b8a8" stroke-width=".7"/><path d="M4 7h6" stroke="#fff" stroke-width="2"/></svg></div>
</div>
<div class="hd" style="left:739px;top:190px;width:29px">m2</div>
<div class="hd" style="left:739px;top:213px;width:29px">1</div>
<div class="clip" style="left:772px;width:68px">
<div class="btn bg0" style="left:15px;top:1px"><svg style="left:2px;top:2px" width="14" height="14" viewBox="0 0 14 14"><circle cx="7" cy="7" r="6.9" fill="#9c9c9c"/><circle cx="7" cy="7" r="5.6" fill="#a6a6a6"/><path d="M7 4v6M4 7h6" stroke="#b6b6b6" stroke-width="1.8"/></svg></div><div class="btn bg0" style="left:35px;top:1px"><svg style="left:2px;top:2px" width="14" height="14" viewBox="0 0 14 14"><circle cx="7" cy="7" r="6.9" fill="#9c9c9c"/><circle cx="7" cy="7" r="5.6" fill="#a6a6a6"/><path d="M4 7h6" stroke="#b6b6b6" stroke-width="1.8"/></svg></div>
</div>
<div class="hd" style="left:772px;top:190px;width:68px">bfk lbt_1/2</div>
<div class="hd" style="left:772px;top:213px;width:68px">1</div>
<div class="clip" style="left:844px;width:78px">
<div class="btn bg0" style="left:20px;top:1px"><svg style="left:2px;top:2px" width="14" height="14" viewBox="0 0 14 14"><circle cx="7" cy="7" r="6.9" fill="#9c9c9c"/><circle cx="7" cy="7" r="5.6" fill="#a6a6a6"/><path d="M7 4v6M4 7h6" stroke="#b6b6b6" stroke-width="1.8"/></svg></div><div class="btn bg0" style="left:40px;top:1px"><svg style="left:2px;top:2px" width="14" height="14" viewBox="0 0 14 14"><circle cx="7" cy="7" r="6.9" fill="#9c9c9c"/><circle cx="7" cy="7" r="5.6" fill="#a6a6a6"/><path d="M4 7h6" stroke="#b6b6b6" stroke-width="1.8"/></svg></div>
</div>
<div class="hd" style="left:844px;top:190px;width:78px">bfk lbtw_1/2</div>
<div class="hd" style="left:844px;top:213px;width:78px">1</div>
<div class="clip" style="left:926px;width:99px">
<div class="btn bg0" style="left:30px;top:1px"><svg style="left:2px;top:2px" width="14" height="14" viewBox="0 0 14 14"><circle cx="7" cy="7" r="6.9" fill="#9c9c9c"/><circle cx="7" cy="7" r="5.6" fill="#a6a6a6"/><path d="M7 4v6M4 7h6" stroke="#b6b6b6" stroke-width="1.8"/></svg></div><div class="btn bg0" style="left:50px;top:1px"><svg style="left:2px;top:2px" width="14" height="14" viewBox="0 0 14 14"><circle cx="7" cy="7" r="6.9" fill="#9c9c9c"/><circle cx="7" cy="7" r="5.6" fill="#a6a6a6"/><path d="M4 7h6" stroke="#b6b6b6" stroke-width="1.8"/></svg></div>
</div>
<div class="hd" style="left:926px;top:190px;width:99px">proj-komp lbt_1...</div>
<div class="hd" style="left:926px;top:213px;width:99px">1</div>
<div class="clip" style="left:1029px;width:99px">
<div class="btn bg0" style="left:30px;top:1px"><svg style="left:2px;top:2px" width="14" height="14" viewBox="0 0 14 14"><circle cx="7" cy="7" r="6.9" fill="#9c9c9c"/><circle cx="7" cy="7" r="5.6" fill="#a6a6a6"/><path d="M7 4v6M4 7h6" stroke="#b6b6b6" stroke-width="1.8"/></svg></div><div class="btn bg0" style="left:50px;top:1px"><svg style="left:2px;top:2px" width="14" height="14" viewBox="0 0 14 14"><circle cx="7" cy="7" r="6.9" fill="#9c9c9c"/><circle cx="7" cy="7" r="5.6" fill="#a6a6a6"/><path d="M4 7h6" stroke="#b6b6b6" stroke-width="1.8"/></svg></div>
</div>
<div class="hd" style="left:1029px;top:190px;width:99px">proj-komp lbtw...</div>
<div class="hd" style="left:1029px;top:213px;width:99px">1</div>
<div class="hd" style="left:1132px;top:190px;width:39px">AnmN</div>
<div class="hd" style="left:1132px;top:213px;width:39px">D</div>
<div class="clip" style="left:1175px;width:32px">
<div class="btn bg0" style="left:4px;top:1px"><svg style="left:2px;top:2px" width="14" height="14" viewBox="0 0 14 14"><circle cx="7" cy="7" r="6.9" fill="#9c9c9c"/><circle cx="7" cy="7" r="5.6" fill="#a6a6a6"/><path d="M7 4v6M4 7h6" stroke="#b6b6b6" stroke-width="1.8"/></svg></div><div class="btn bg0" style="left:24px;top:1px"><svg style="left:2px;top:2px" width="14" height="14" viewBox="0 0 14 14"><circle cx="7" cy="7" r="6.9" fill="#9c9c9c"/><circle cx="7" cy="7" r="5.6" fill="#a6a6a6"/><path d="M4 7h6" stroke="#b6b6b6" stroke-width="1.8"/></svg></div>
</div>
<div class="hd" style="left:1175px;top:190px;width:33px">schrP</div>
<div class="hd" style="left:1175px;top:213px;width:33px">1</div>
<div class="clip" style="left:1212px;width:31px">
<div class="btn bg0" style="left:4px;top:1px"><svg style="left:2px;top:2px" width="14" height="14" viewBox="0 0 14 14"><circle cx="7" cy="7" r="6.9" fill="#9c9c9c"/><circle cx="7" cy="7" r="5.6" fill="#a6a6a6"/><path d="M7 4v6M4 7h6" stroke="#b6b6b6" stroke-width="1.8"/></svg></div><div class="btn bg0" style="left:24px;top:1px"><svg style="left:2px;top:2px" width="14" height="14" viewBox="0 0 14 14"><circle cx="7" cy="7" r="6.9" fill="#9c9c9c"/><circle cx="7" cy="7" r="5.6" fill="#a6a6a6"/><path d="M4 7h6" stroke="#b6b6b6" stroke-width="1.8"/></svg></div>
</div>
<div class="hd" style="left:1212px;top:190px;width:32px">mdlP</div>
<div class="hd" style="left:1212px;top:213px;width:32px">1</div>
<div class="hd" style="left:1248px;top:190px;width:26px">PrfL</div>
<div class="hd" style="left:1248px;top:213px;width:26px">D</div>
<div class="hd" style="left:1278px;top:190px;width:59px">Anm+PrfL</div>
<div class="hd" style="left:1278px;top:213px;width:59px">D</div>
<div class="hd" style="left:1341px;top:190px;width:39px">ganzN</div>
<div class="hd" style="left:1341px;top:213px;width:39px">D</div>
<div class="clip" style="left:1384px;width:25px">
<div class="btn bg0" style="left:4px;top:1px"><svg style="left:2px;top:2px" width="14" height="14" viewBox="0 0 14 14"><circle cx="7" cy="7" r="6.9" fill="#9c9c9c"/><circle cx="7" cy="7" r="5.6" fill="#a6a6a6"/><path d="M7 4v6M4 7h6" stroke="#b6b6b6" stroke-width="1.8"/></svg></div><div class="btn bg0" style="left:24px;top:1px"><svg style="left:2px;top:2px" width="14" height="14" viewBox="0 0 14 14"><circle cx="7" cy="7" r="6.9" fill="#9c9c9c"/><circle cx="7" cy="7" r="5.6" fill="#a6a6a6"/><path d="M4 7h6" stroke="#b6b6b6" stroke-width="1.8"/></svg></div>
</div>
<div class="hd" style="left:1384px;top:190px;width:26px">PB</div>
<div class="hd" style="left:1384px;top:213px;width:26px">1</div>
<div class="clip" style="left:1414px;width:28px">
<div class="btn bg0" style="left:4px;top:1px"><svg style="left:2px;top:2px" width="14" height="14" viewBox="0 0 14 14"><circle cx="7" cy="7" r="6.9" fill="#9c9c9c"/><circle cx="7" cy="7" r="5.6" fill="#a6a6a6"/><path d="M7 4v6M4 7h6" stroke="#b6b6b6" stroke-width="1.8"/></svg></div><div class="btn bg0" style="left:24px;top:1px"><svg style="left:2px;top:2px" width="14" height="14" viewBox="0 0 14 14"><circle cx="7" cy="7" r="6.9" fill="#9c9c9c"/><circle cx="7" cy="7" r="5.6" fill="#a6a6a6"/><path d="M4 7h6" stroke="#b6b6b6" stroke-width="1.8"/></svg></div>
</div>
<div class="hd" style="left:1414px;top:190px;width:29px">NVJ</div>
<div class="hd" style="left:1414px;top:213px;width:29px">1</div>
<div class="hd" style="left:1447px;top:190px;width:53px">EndN</div>
<div class="hd" style="left:1447px;top:213px;width:26px">D</div>
<div class="hd" style="left:1474px;top:213px;width:26px">N</div>
<div class="vl" style="left:1500px;top:166px;height:304px"></div>
<div class="hl" style="left:10px;top:166px;width:1491px"></div>
<div class="vl" style="left:160px;top:167px;height:284px"></div>
<div class="hl" style="left:12px;top:189px;width:148px"></div>
<div class="hl" style="left:12px;top:212px;width:148px"></div>
<div class="hl" style="left:12px;top:235px;width:148px"></div>
<div class="vl" style="left:163px;top:167px;height:284px"></div>
<div class="vl" style="left:213px;top:167px;height:302px"></div>
<div class="hl" style="left:165px;top:189px;width:48px"></div>
<div class="hl" style="left:165px;top:212px;width:48px"></div>
<div class="hl" style="left:165px;top:235px;width:48px"></div>
<div class="vl" style="left:216px;top:167px;height:302px"></div>
<div class="vl" style="left:246px;top:167px;height:302px"></div>
<div class="hl" style="left:218px;top:189px;width:28px"></div>
<div class="hl" style="left:218px;top:212px;width:28px"></div>
<div class="hl" style="left:218px;top:235px;width:28px"></div>
<div class="vl" style="left:249px;top:167px;height:302px"></div>
<div class="vl" style="left:279px;top:167px;height:302px"></div>
<div class="hl" style="left:251px;top:189px;width:28px"></div>
<div class="hl" style="left:251px;top:212px;width:28px"></div>
<div class="hl" style="left:251px;top:235px;width:28px"></div>
<div class="vl" style="left:282px;top:167px;height:302px"></div>
<div class="vl" style="left:351px;top:167px;height:302px"></div>
<div class="hl" style="left:284px;top:189px;width:67px"></div>
<div class="hl" style="left:284px;top:212px;width:67px"></div>
<div class="hl" style="left:284px;top:235px;width:67px"></div>
<div class="vl" style="left:354px;top:167px;height:302px"></div>
<div class="vl" style="left:433px;top:167px;height:302px"></div>
<div class="hl" style="left:356px;top:189px;width:77px"></div>
<div class="hl" style="left:356px;top:212px;width:77px"></div>
<div class="hl" style="left:356px;top:235px;width:77px"></div>
<div class="vl" style="left:436px;top:167px;height:302px"></div>
<div class="vl" style="left:536px;top:167px;height:302px"></div>
<div class="hl" style="left:438px;top:189px;width:98px"></div>
<div class="hl" style="left:438px;top:212px;width:98px"></div>
<div class="hl" style="left:438px;top:235px;width:98px"></div>
<div class="vl" style="left:539px;top:167px;height:302px"></div>
<div class="vl" style="left:639px;top:167px;height:302px"></div>
<div class="hl" style="left:541px;top:189px;width:98px"></div>
<div class="hl" style="left:541px;top:212px;width:98px"></div>
<div class="hl" style="left:541px;top:235px;width:98px"></div>
<div class="vl" style="left:642px;top:167px;height:302px"></div>
<div class="vl" style="left:702px;top:167px;height:302px"></div>
<div class="hl" style="left:644px;top:189px;width:58px"></div>
<div class="hl" style="left:644px;top:212px;width:58px"></div>
<div class="hl" style="left:644px;top:235px;width:58px"></div>
<div class="vl" style="left:705px;top:167px;height:302px"></div>
<div class="vl" style="left:735px;top:167px;height:302px"></div>
<div class="hl" style="left:707px;top:189px;width:28px"></div>
<div class="hl" style="left:707px;top:212px;width:28px"></div>
<div class="hl" style="left:707px;top:235px;width:28px"></div>
<div class="vl" style="left:738px;top:167px;height:302px"></div>
<div class="vl" style="left:768px;top:167px;height:302px"></div>
<div class="hl" style="left:740px;top:189px;width:28px"></div>
<div class="hl" style="left:740px;top:212px;width:28px"></div>
<div class="hl" style="left:740px;top:235px;width:28px"></div>
<div class="vl" style="left:771px;top:167px;height:302px"></div>
<div class="vl" style="left:840px;top:167px;height:302px"></div>
<div class="hl" style="left:773px;top:189px;width:67px"></div>
<div class="hl" style="left:773px;top:212px;width:67px"></div>
<div class="hl" style="left:773px;top:235px;width:67px"></div>
<div class="vl" style="left:843px;top:167px;height:302px"></div>
<div class="vl" style="left:922px;top:167px;height:302px"></div>
<div class="hl" style="left:845px;top:189px;width:77px"></div>
<div class="hl" style="left:845px;top:212px;width:77px"></div>
<div class="hl" style="left:845px;top:235px;width:77px"></div>
<div class="vl" style="left:925px;top:167px;height:302px"></div>
<div class="vl" style="left:1025px;top:167px;height:302px"></div>
<div class="hl" style="left:927px;top:189px;width:98px"></div>
<div class="hl" style="left:927px;top:212px;width:98px"></div>
<div class="hl" style="left:927px;top:235px;width:98px"></div>
<div class="vl" style="left:1028px;top:167px;height:302px"></div>
<div class="vl" style="left:1128px;top:167px;height:302px"></div>
<div class="hl" style="left:1030px;top:189px;width:98px"></div>
<div class="hl" style="left:1030px;top:212px;width:98px"></div>
<div class="hl" style="left:1030px;top:235px;width:98px"></div>
<div class="vl" style="left:1131px;top:167px;height:302px"></div>
<div class="vl" style="left:1171px;top:167px;height:302px"></div>
<div class="hl" style="left:1133px;top:189px;width:38px"></div>
<div class="hl" style="left:1133px;top:212px;width:38px"></div>
<div class="hl" style="left:1133px;top:235px;width:38px"></div>
<div class="vl" style="left:1174px;top:167px;height:302px"></div>
<div class="vl" style="left:1208px;top:167px;height:302px"></div>
<div class="hl" style="left:1176px;top:189px;width:32px"></div>
<div class="hl" style="left:1176px;top:212px;width:32px"></div>
<div class="hl" style="left:1176px;top:235px;width:32px"></div>
<div class="vl" style="left:1211px;top:167px;height:302px"></div>
<div class="vl" style="left:1244px;top:167px;height:302px"></div>
<div class="hl" style="left:1213px;top:189px;width:31px"></div>
<div class="hl" style="left:1213px;top:212px;width:31px"></div>
<div class="hl" style="left:1213px;top:235px;width:31px"></div>
<div class="vl" style="left:1247px;top:167px;height:302px"></div>
<div class="vl" style="left:1274px;top:167px;height:302px"></div>
<div class="hl" style="left:1249px;top:189px;width:25px"></div>
<div class="hl" style="left:1249px;top:212px;width:25px"></div>
<div class="hl" style="left:1249px;top:235px;width:25px"></div>
<div class="vl" style="left:1277px;top:167px;height:302px"></div>
<div class="vl" style="left:1337px;top:167px;height:302px"></div>
<div class="hl" style="left:1279px;top:189px;width:58px"></div>
<div class="hl" style="left:1279px;top:212px;width:58px"></div>
<div class="hl" style="left:1279px;top:235px;width:58px"></div>
<div class="vl" style="left:1340px;top:167px;height:302px"></div>
<div class="vl" style="left:1380px;top:167px;height:302px"></div>
<div class="hl" style="left:1342px;top:189px;width:38px"></div>
<div class="hl" style="left:1342px;top:212px;width:38px"></div>
<div class="hl" style="left:1342px;top:235px;width:38px"></div>
<div class="vl" style="left:1383px;top:167px;height:302px"></div>
<div class="vl" style="left:1410px;top:167px;height:302px"></div>
<div class="hl" style="left:1385px;top:189px;width:25px"></div>
<div class="hl" style="left:1385px;top:212px;width:25px"></div>
<div class="hl" style="left:1385px;top:235px;width:25px"></div>
<div class="vl" style="left:1413px;top:167px;height:302px"></div>
<div class="vl" style="left:1443px;top:167px;height:302px"></div>
<div class="hl" style="left:1415px;top:189px;width:28px"></div>
<div class="hl" style="left:1415px;top:212px;width:28px"></div>
<div class="hl" style="left:1415px;top:235px;width:28px"></div>
<div class="vl" style="left:1446px;top:167px;height:302px"></div>
<div class="hl" style="left:1448px;top:189px;width:52px"></div>
<div class="hl" style="left:1448px;top:212px;width:52px"></div>
<div class="hl" style="left:1448px;top:235px;width:52px"></div>
<div class="vl" style="left:672px;top:213px;height:256px"></div>
<div class="vl" style="left:1473px;top:213px;height:256px"></div>
<div class="hl" style="left:11px;top:253px;width:1489px"></div>
<div class="hl" style="left:11px;top:271px;width:1489px"></div>
<div class="hl" style="left:11px;top:289px;width:1489px"></div>
<div class="hl" style="left:11px;top:307px;width:1489px"></div>
<div class="hl" style="left:11px;top:325px;width:1489px"></div>
<div class="hl" style="left:11px;top:343px;width:1489px"></div>
<div class="hl" style="left:11px;top:361px;width:1489px"></div>
<div class="hl" style="left:11px;top:379px;width:1489px"></div>
<div class="hl" style="left:11px;top:397px;width:1489px"></div>
<div class="hl" style="left:11px;top:415px;width:1489px"></div>
<div class="hl" style="left:11px;top:433px;width:1489px"></div>
<div class="hl" style="left:11px;top:451px;width:1489px"></div>
<div class="hl" style="left:11px;top:469px;width:1489px"></div>
<svg style="left:0;top:0" width="1524" height="654" viewBox="0 0 1524 654">
<defs><filter id="sh" x="-20%" y="-50%" width="150%" height="300%"><feGaussianBlur stdDeviation="1.5"/></filter></defs>
<path d="M135 244.5H160.5V241.9L170.5 245.5L160.5 249.1V246.5H135z" transform="translate(3,3)" fill="#555" opacity=".55" filter="url(#sh)"/>
<path d="M135 244.5H160.5V241.9L170.5 245.5L160.5 249.1V246.5H135z" fill="#f00"/>
<path d="M147 261.5H165.5V258.9L175.5 262.5L165.5 266.1V263.5H147z" transform="translate(3,3)" fill="#555" opacity=".55" filter="url(#sh)"/>
<path d="M147 261.5H165.5V258.9L175.5 262.5L165.5 266.1V263.5H147z" fill="#f00"/>
<path d="M24 475.5H76.5L130 246L93 475.5H140A7 7 0 0 1 147 482.5V504.5A7 7 0 0 1 140 511.5H24A7 7 0 0 1 17 504.5V482.5A7 7 0 0 1 24 475.5z" fill="#fff" stroke="none"/>
<path d="M76.5 475.5L130 246L93 475.5" fill="none" stroke="#000" stroke-width=".9"/>
<path d="M93 475.5H140A7 7 0 0 1 147 482.5V504.5A7 7 0 0 1 140 511.5H24A7 7 0 0 1 17 504.5V482.5A7 7 0 0 1 24 475.5H76.5" fill="none" stroke="#000" stroke-width="1.6"/>
<text x="82.0" y="490.0" text-anchor="middle" font-family="Liberation Sans,sans-serif" font-size="12" letter-spacing="0.1">Noten ohne</text>
<text x="82.0" y="503.5" text-anchor="middle" font-family="Liberation Sans,sans-serif" font-size="12" letter-spacing="0.1">Abschlussprüfung</text>
<path d="M93 528.5H160L137 261L180.5 528.5H253A8 8 0 0 1 261 536.5V556.5A8 8 0 0 1 253 564.5H93A8 8 0 0 1 85 556.5V536.5A8 8 0 0 1 93 528.5z" fill="#fff" stroke="none"/>
<path d="M160 528.5L137 261L180.5 528.5" fill="none" stroke="#000" stroke-width=".9"/>
<path d="M180.5 528.5H253A8 8 0 0 1 261 536.5V556.5A8 8 0 0 1 253 564.5H93A8 8 0 0 1 85 556.5V536.5A8 8 0 0 1 93 528.5H160" fill="none" stroke="#000" stroke-width="1.6"/>
<text x="173.0" y="543.0" text-anchor="middle" font-family="Liberation Sans,sans-serif" font-size="12" letter-spacing="0.1">Noten mit</text>
<text x="173.0" y="556.5" text-anchor="middle" font-family="Liberation Sans,sans-serif" font-size="12" letter-spacing="0.1">Berufsschulabschlussprüfung</text>
<path d="M304 506H339L353.5 313L354 506H387A11 11 0 0 1 398 517V553A11 11 0 0 1 387 564H304A11 11 0 0 1 293 553V517A11 11 0 0 1 304 506z" fill="#fff" stroke="none"/>
<path d="M339 506L353.5 313L354 506" fill="none" stroke="#000" stroke-width=".9"/>
<path d="M354 506H387A11 11 0 0 1 398 517V553A11 11 0 0 1 387 564H304A11 11 0 0 1 293 553V517A11 11 0 0 1 304 506H339" fill="none" stroke="#000" stroke-width="1.6"/>
<text x="345.5" y="525.0" text-anchor="middle" font-family="Liberation Sans,sans-serif" font-size="12" letter-spacing="0.1">Noten &quot;BFK&quot; von</text>
<text x="345.5" y="538.5" text-anchor="middle" font-family="Liberation Sans,sans-serif" font-size="12" letter-spacing="0.1">mehreren</text>
<text x="345.5" y="552.0" text-anchor="middle" font-family="Liberation Sans,sans-serif" font-size="12" letter-spacing="0.1">Lehrkräften</text>
<path d="M498.5 497H535L541 332L548.5 497H586A11 11 0 0 1 597 508V553A11 11 0 0 1 586 564H498.5A11 11 0 0 1 487.5 553V508A11 11 0 0 1 498.5 497z" fill="#fff" stroke="none"/>
<path d="M535 497L541 332L548.5 497" fill="none" stroke="#000" stroke-width=".9"/>
<path d="M548.5 497H586A11 11 0 0 1 597 508V553A11 11 0 0 1 586 564H498.5A11 11 0 0 1 487.5 553V508A11 11 0 0 1 498.5 497H535" fill="none" stroke="#000" stroke-width="1.6"/>
<text x="542.25" y="512.5" text-anchor="middle" font-family="Liberation Sans,sans-serif" font-size="12" letter-spacing="0.1">Noten &quot;Proj-</text>
<text x="542.25" y="526.0" text-anchor="middle" font-family="Liberation Sans,sans-serif" font-size="12" letter-spacing="0.1">Komp&quot; von</text>
<text x="542.25" y="539.5" text-anchor="middle" font-family="Liberation Sans,sans-serif" font-size="12" letter-spacing="0.1">mehreren</text>
<text x="542.25" y="553.0" text-anchor="middle" font-family="Liberation Sans,sans-serif" font-size="12" letter-spacing="0.1">Lehrkräften</text>
<path d="M953 474H1056L1193.5 270L1085 474H1164.5A9 9 0 0 1 1173.5 483V505.5A9 9 0 0 1 1164.5 514.5H953A9 9 0 0 1 944 505.5V483A9 9 0 0 1 953 474z" fill="#fff" stroke="none"/>
<path d="M1056 474L1193.5 270L1085 474" fill="none" stroke="#000" stroke-width=".9"/>
<path d="M1085 474H1164.5A9 9 0 0 1 1173.5 483V505.5A9 9 0 0 1 1164.5 514.5H953A9 9 0 0 1 944 505.5V483A9 9 0 0 1 953 474H1056" fill="none" stroke="#000" stroke-width="1.6"/>
<text x="1058.75" y="491.0" text-anchor="middle" font-family="Liberation Sans,sans-serif" font-size="12" letter-spacing="0.1">Berufsschul - Prüfungsnoten in &quot;schrP&quot;</text>
<text x="1058.75" y="504.5" text-anchor="middle" font-family="Liberation Sans,sans-serif" font-size="12" letter-spacing="0.1">und ggf. &quot;mdlP&quot;</text>
<path d="M1194.5 477H1270L1387 386.5L1294.5 477H1330.5A8 8 0 0 1 1338.5 485V503.5A8 8 0 0 1 1330.5 511.5H1194.5A8 8 0 0 1 1186.5 503.5V485A8 8 0 0 1 1194.5 477z" fill="#fff" stroke="none"/>
<path d="M1270 477L1387 386.5L1294.5 477" fill="none" stroke="#000" stroke-width=".9"/>
<path d="M1294.5 477H1330.5A8 8 0 0 1 1338.5 485V503.5A8 8 0 0 1 1330.5 511.5H1194.5A8 8 0 0 1 1186.5 503.5V485A8 8 0 0 1 1194.5 477H1270" fill="none" stroke="#000" stroke-width="1.6"/>
<text x="1262.5" y="491.0" text-anchor="middle" font-family="Liberation Sans,sans-serif" font-size="12" letter-spacing="0.1">Kammer - Prüfungsnoten</text>
<text x="1262.5" y="504.5" text-anchor="middle" font-family="Liberation Sans,sans-serif" font-size="12" letter-spacing="0.1">in &quot;PB&quot;</text>
<path d="M1360 475H1416.5L1430 356L1431.5 475H1485A10 10 0 0 1 1495 485V514.5A10 10 0 0 1 1485 524.5H1360A10 10 0 0 1 1350 514.5V485A10 10 0 0 1 1360 475z" fill="#fff" stroke="none"/>
<path d="M1416.5 475L1430 356L1431.5 475" fill="none" stroke="#000" stroke-width=".9"/>
<path d="M1431.5 475H1485A10 10 0 0 1 1495 485V514.5A10 10 0 0 1 1485 524.5H1360A10 10 0 0 1 1350 514.5V485A10 10 0 0 1 1360 475H1416.5" fill="none" stroke="#000" stroke-width="1.6"/>
<text x="1422.5" y="489.0" text-anchor="middle" font-family="Liberation Sans,sans-serif" font-size="12" letter-spacing="0.1">Vorjahresnoten werden</text>
<text x="1422.5" y="502.5" text-anchor="middle" font-family="Liberation Sans,sans-serif" font-size="12" letter-spacing="0.1">über den Notenblock</text>
<text x="1422.5" y="516.0" text-anchor="middle" font-family="Liberation Sans,sans-serif" font-size="12" letter-spacing="0.1">&quot;VJN&quot; eingetragen</text>
</svg>
</body></html>
